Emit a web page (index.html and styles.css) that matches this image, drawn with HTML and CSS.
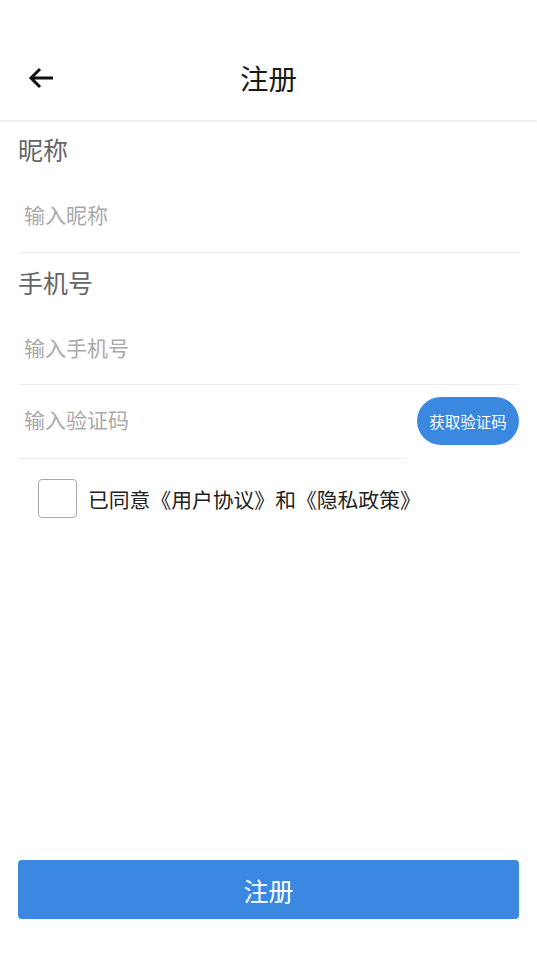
FILE: index.html
```html
<!DOCTYPE html>
<html lang="zh-CN">
<head>
    <meta charset="UTF-8">
    <meta name="viewport" content="width=device-width, initial-scale=1.0">
    <title>注册</title>
    <link rel="stylesheet" href="styles.css">
</head>
<body>
    <div class="top-bar">
        <span class="back-button">
            <svg width="28" height="24" viewBox="0 0 28 24">
                <path d="M26 12H4 M13 3L4 12l9 9" fill="none" stroke="#111" stroke-width="3" stroke-linecap="butt" stroke-linejoin="miter"/>
            </svg>
        </span>
        <div class="top-title">注册</div>
    </div>

    <div class="form">
        <div class="field-label">昵称</div>
        <div class="field-row">
            <input class="field-input" type="text" placeholder="输入昵称">
        </div>

        <div class="field-label">手机号</div>
        <div class="field-row phone-field">
            <input class="field-input" type="tel" placeholder="输入手机号">
        </div>
        <div class="code-row">
            <div class="field-row code-field">
                <input class="field-input" type="text" placeholder="输入验证码">
            </div>
            <button class="code-button">获取验证码</button>
        </div>

        <label class="agree-row">
            <span class="check-box"></span>
            <span class="agree-text">已同意《用户协议》和《隐私政策》</span>
        </label>
    </div>

    <button class="submit-button">注册</button>
</body>
</html>
```

FILE: styles.css
```css
html, body {
    margin: 0;
    padding: 0;
    height: 100%;
}

body {
    display: flex;
    flex-direction: column;
    background: #fff;
    font-family: "Noto Sans CJK SC", "Noto Sans", sans-serif;
    color: #222;
}

.top-bar {
    position: relative;
    height: 120px;
    display: flex;
    align-items: center;
    justify-content: center;
    box-shadow: 0 1px 3px rgba(0, 0, 0, 0.12);
    padding-top: 36px;
    box-sizing: border-box;
}

.back-button {
    position: absolute;
    left: 27px;
    top: 66px;
    display: flex;
}

.top-title {
    font-size: 28.5px;
    line-height: 40px;
    color: #1a1a1a;
}

.form {
    padding: 0 18px;
}

.field-label {
    font-size: 25px;
    line-height: 58px;
    height: 62px;
    color: #666;
}

.field-row {
    height: 71px;
    display: flex;
    align-items: center;
    border-bottom: 1px solid #ececec;
    box-sizing: border-box;
    padding-bottom: 6px;
}

.phone-field {
    height: 70px;
}

.field-input {
    border: none;
    outline: none;
    padding: 0 6px;
    width: 100%;
    font-family: inherit;
    font-size: 21px;
    color: #333;
    background: transparent;
}

.field-input::placeholder {
    color: #aaa;
}

.code-row {
    display: flex;
    align-items: center;
}

.code-field {
    flex: 1;
    height: 74px;
    margin-right: 12px;
}

.code-button {
    width: 102px;
    height: 48px;
    border: none;
    border-radius: 24px;
    background: #3a88e0;
    color: #fff;
    font-family: inherit;
    font-size: 15.5px;
    padding: 0;
    margin-top: -3px;
}

.agree-row {
    display: flex;
    align-items: center;
    padding: 20px 0 0 20px;
}

.check-box {
    width: 37px;
    height: 37px;
    border: 1px solid #aaa;
    border-radius: 4px;
}

.agree-text {
    margin-left: 11px;
    font-size: 20.8px;
    color: #222;
}

.submit-button {
    margin: auto 18px 37px;
    height: 59px;
    border: none;
    border-radius: 4px;
    background: #3a88e0;
    color: #fff;
    font-family: inherit;
    font-size: 25px;
}
```
